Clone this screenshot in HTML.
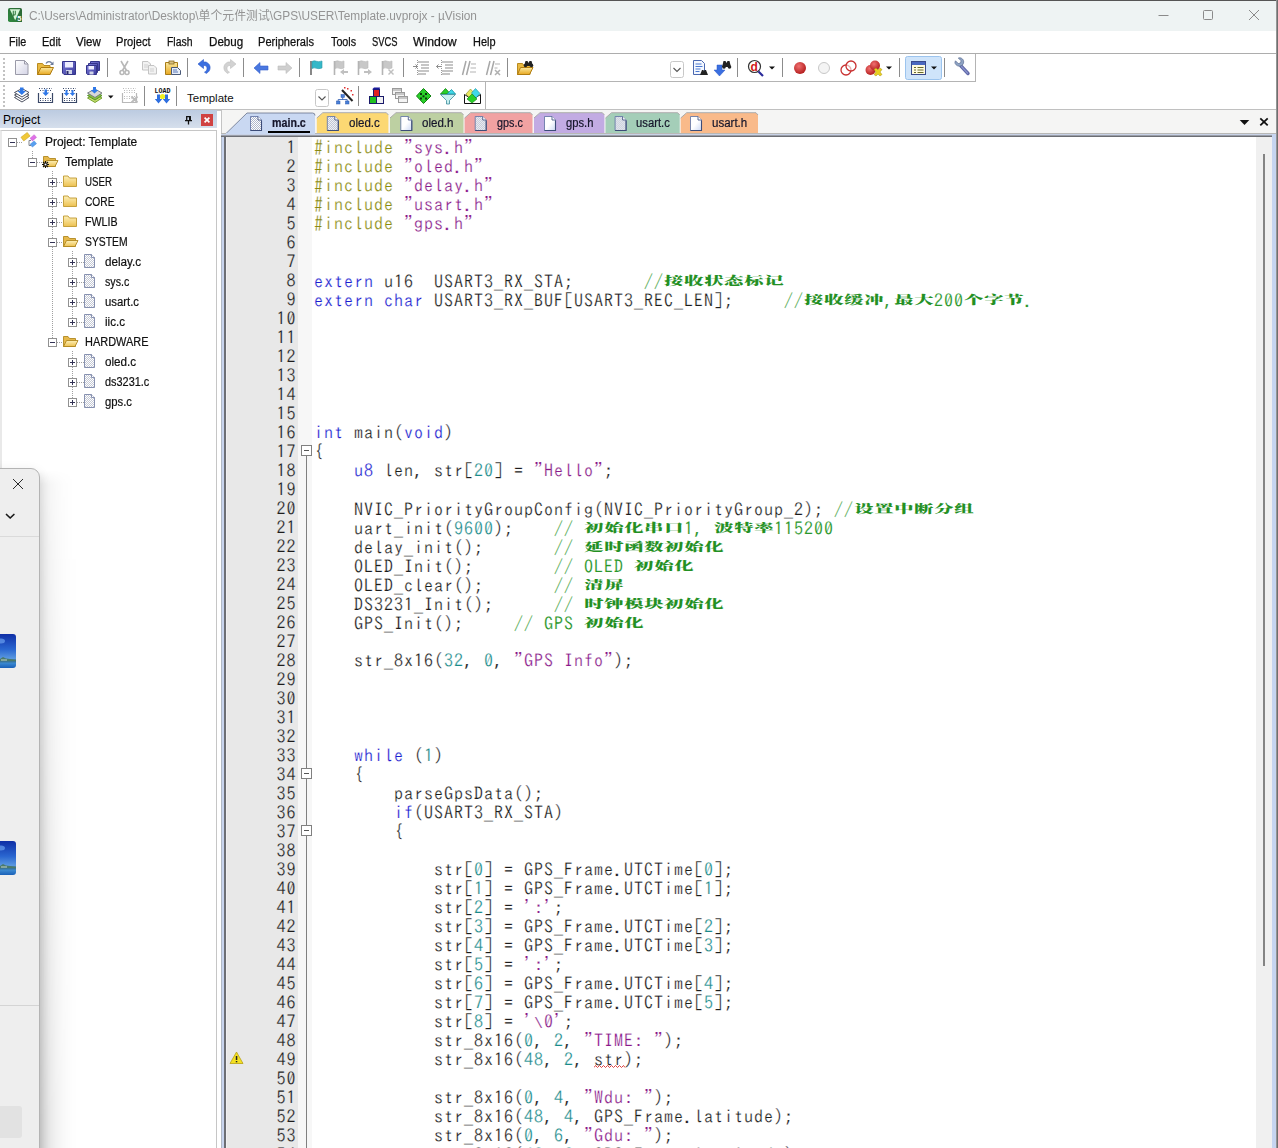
<!DOCTYPE html>
<html lang="zh"><head><meta charset="utf-8"><title>µVision</title>
<style>
*{box-sizing:border-box;margin:0;padding:0}
html,body{width:1278px;height:1148px;overflow:hidden;background:#fff}
body{position:relative;font-family:"Liberation Sans","Noto Sans CJK SC",sans-serif;font-size:12px;color:#000}
.abs{position:absolute}
#title{position:absolute;left:0;top:0;width:1278px;height:31px;background:#eef3f3;border-top:1px solid #555}
#title .t{position:absolute;left:29px;top:8px;font-size:12px;line-height:14px;color:#949494;white-space:nowrap;transform-origin:0 0}
#menu{position:absolute;left:0;top:31px;width:1278px;height:23px;background:#fff;border-bottom:1px solid #adadad}
#menu span{-webkit-text-stroke:.25px #111;position:absolute;top:4px;font-size:12px;line-height:14px;white-space:nowrap;transform-origin:0 0;color:#111}
#tb1{position:absolute;left:0;top:54px;width:976px;height:28px;border-bottom:1px solid #b4b4b4;border-right:1px solid #b4b4b4;background:#fff}
#tb2{position:absolute;left:0;top:82px;width:486px;height:28px;border-right:1px solid #b4b4b4;background:#fff}
#hline{position:absolute;left:0;top:109px;width:1278px;height:2px;background:linear-gradient(#bdbdbd,#cacaca)}
.sep{position:absolute;width:1px;background:#8c8c8c}
.grip{position:absolute;left:3px;width:3px;border-left:2px dotted #b0b0b0}
/* project panel */
#proj{position:absolute;left:0;top:110px;width:217px;height:1038px;background:#fff}
#projhd{position:absolute;left:0;top:0;width:217px;height:18px;background:linear-gradient(#bccbe1,#d6dfec);}
#projhd .lb{position:absolute;left:3px;top:3px;font-size:12px;line-height:14px;transform-origin:0 0;white-space:nowrap}
#tree{position:absolute;left:0;top:20px;width:217px;height:1018px;background:#fff;border:1px solid #c6c6c6;border-bottom:0;border-left:2px solid #e9e9e9}
.tr{-webkit-text-stroke:.2px #111;position:absolute;font-size:12px;white-space:nowrap;line-height:20px;height:20px;transform-origin:0 0;color:#111}
.ex{position:absolute;width:9px;height:9px;border:1px solid #919191;background:#fff}
.ex:before{content:"";position:absolute;left:1px;top:3px;width:5px;height:1px;background:#335}
.ex.pl:after{content:"";position:absolute;left:3px;top:1px;width:1px;height:5px;background:#335}
/* editor */
#tabs{position:absolute;left:222px;top:110px;width:1054px;height:24px;background:#f5f5f4}
.tab{position:absolute;top:3px;height:21px;border-radius:4px 4px 0 0;font-size:12px;line-height:20px;white-space:nowrap}
.tabl{-webkit-text-stroke:.2px #15152a;position:absolute;top:6px;font-size:12px;line-height:14px;white-space:nowrap;transform-origin:0 0;color:#15152a}
#edframe{position:absolute;left:221px;top:133px;width:1055px;height:1015px;background:linear-gradient(to right,#b0b8c4 0,#b0b8c4 1px,#c8d4ee 1px,#c8d4ee 3px,#6c6e74 3px,#6c6e74 5px,#f0f0f2 5px,#f0f0f2 6px,#fff 6px)}
#edtop{position:absolute;left:221px;top:133px;width:1055px;height:4px;background:linear-gradient(to bottom,#b8b8b6 0,#b8b8b6 1px,#c8d2e6 1px,#c8d2e6 2px,#9a9ea8 2px,#9a9ea8 3px,#6c6e74 3px)}
#edin{position:absolute;left:227px;top:137px;width:1029px;height:1011px;background:#fff}
#sb{position:absolute;left:1256px;top:137px;width:16px;height:1011px;background:#f0f0f0}
#sb i{position:absolute;left:7px;top:17px;width:2px;height:812px;background:#848484}
#rb{position:absolute;left:1272px;top:134px;width:4px;height:1014px;background:#c6d5f0}
#wb{position:absolute;left:1276px;top:0;width:2px;height:1148px;background:linear-gradient(to right,#a8a8a8,#5c5c5c)}
#gut{position:absolute;left:227px;top:137px;width:71px;height:1011px;background:#e8e8e8}
#fold{position:absolute;left:298px;top:137px;width:14px;height:1011px;background:#f7f7f7}
.ln,.cl{position:absolute;height:19px;line-height:19px;white-space:pre;font-family:"IPAGothic","Liberation Mono",monospace;font-size:18px;letter-spacing:1px}
.ln{left:226px;width:70.5px;text-align:right;color:#1c1c1c;-webkit-text-stroke:.2px #e8e8e8}
.cl{left:314px;color:#1c1c1c;-webkit-text-stroke:.22px #fff}
.cl i{font-style:normal;-webkit-text-stroke:.15px #333;color:#333}
.k{color:#1c1cd0}.n{color:#1a8a8a}.s{color:#8a1a8a}.p{color:#8a8a10}.c{color:#2a962a;-webkit-text-stroke:.12px #fff}
.c b{-webkit-text-stroke:.1px #239023;display:inline-block;width:20px;letter-spacing:0;font-family:"Noto Serif CJK SC",serif;font-weight:900;font-size:18px;color:#239023;transform:translateY(-1.5px) scale(1.07,.63);transform-origin:50% 62%;text-align:center}
.fb{position:absolute;left:301px;width:11px;height:11px;border:1px solid #808080;background:#fff}
.fb:before{content:"";position:absolute;left:2px;top:4px;width:5px;height:1px;background:#555}
.bs{font-family:"Liberation Mono",monospace;font-size:15px}
.sq{}
</style></head><body>

<div id="title">
<svg class="abs" style="left:8px;top:7px" width="14" height="14" viewBox="0 0 14 14"><defs><linearGradient id="lg0" x1="0" y1="1" x2="1" y2="0"><stop offset="0" stop-color="#2f8a40"/><stop offset="1" stop-color="#2a6434"/></linearGradient></defs><rect width="14" height="14" rx="1.800" fill="url(#lg0)"/><path d="M1.800 1.300h10.400l-5 11z" fill="#d6f6d8"/><path d="M5.300 2.800v3.200q0 1 1 1t1-1v-3.200M5.300 6v2.500" fill="none" stroke="#3a8048" stroke-width="1.100"/><rect x="9" y="8" width="5" height="6" fill="#2c7038"/><text x="9.300" y="13.300" font-family="Liberation Sans,sans-serif" font-weight="bold" font-size="7.500" fill="#fff">5</text></svg>
<div class="t" style="transform:scaleX(0.9893)">C:\Users\Administrator\Desktop\单个元件测试\GPS\USER\Template.uvprojx - µVision</div>
<svg class="abs" style="left:1156px;top:7px" width="110" height="16" viewBox="0 0 110 16" fill="none" stroke="#8a8a8a" stroke-width="1"><path d="M2.5 7.5h10"/><rect x="47.500" y="2.500" width="9" height="9" rx="1"/><path d="M93 2l10 10M103 2l-10 10"/></svg>
</div>

<div id="menu"><span style="left:8.5px;transform:scaleX(0.8943)">File</span><span style="left:41.7px;transform:scaleX(0.9136)">Edit</span><span style="left:76.3px;transform:scaleX(0.9614)">View</span><span style="left:116.4px;transform:scaleX(0.9261)">Project</span><span style="left:166.8px;transform:scaleX(0.869)">Flash</span><span style="left:208.5px;transform:scaleX(0.9668)">Debug</span><span style="left:258.3px;transform:scaleX(0.9225)">Peripherals</span><span style="left:330.5px;transform:scaleX(0.8959)">Tools</span><span style="left:372.2px;transform:scaleX(0.7801)">SVCS</span><span style="left:413.0px;transform:scaleX(1.0214)">Window</span><span style="left:472.5px;transform:scaleX(0.9114)">Help</span></div>

<div id="tb1"><svg class="abs" style="left:0;top:0" width="976" height="27" viewBox="0 0 976 27">
<defs>
<linearGradient id="gdoc" x1="0" y1="0" x2="1" y2="1"><stop offset="0" stop-color="#fff"/><stop offset="1" stop-color="#d4d4e6"/></linearGradient>
<linearGradient id="gfold" x1="0" y1="0" x2="0" y2="1"><stop offset="0" stop-color="#fbe9a0"/><stop offset="1" stop-color="#e8a820"/></linearGradient>
<linearGradient id="gflop" x1="0" y1="0" x2="1" y2="1"><stop offset="0" stop-color="#7a7ad8"/><stop offset="1" stop-color="#3c3c9c"/></linearGradient>
<radialGradient id="gred" cx=".4" cy=".35" r=".7"><stop offset="0" stop-color="#f07070"/><stop offset="1" stop-color="#b01818"/></radialGradient>
</defs>
<!-- grip -->
<g fill="#c2c2c2"><rect x="3" y="4" width="2" height="2"/><rect x="3" y="8" width="2" height="2"/><rect x="3" y="12" width="2" height="2"/><rect x="3" y="16" width="2" height="2"/><rect x="3" y="20" width="2" height="2"/><rect x="3" y="24" width="2" height="2"/></g>
<!-- new -->
<path d="M15.500 6.500h9l3.500 3.500v10.500h-12.500z" fill="url(#gdoc)" stroke="#9a9aa8"/><path d="M24.500 6.500v3.500h3.500" fill="none" stroke="#9a9aa8"/>
<!-- open -->
<path d="M37.500 20.500v-11h5l1.500 2h6v9z" fill="#e9b940" stroke="#b88a20"/><path d="M37.500 20.500l3.500-7h12.500l-3.500 7z" fill="url(#gfold)" stroke="#b07c10"/><path d="M46 9.500c1.500-2.500 4.500-2.500 6 0" fill="none" stroke="#6a7a9a" stroke-width="1.300"/><path d="M53.500 7.500v3.500h-3.500z" fill="#6a7a9a"/>
<!-- save -->
<path d="M62.500 7.500h13v13h-11.500l-1.500-1.500z" fill="url(#gflop)" stroke="#34348a"/><rect x="65" y="8" width="8" height="5.500" fill="#eef"/><rect x="66" y="16" width="6" height="4" fill="#cfd4e8"/><rect x="66.500" y="17" width="2" height="3" fill="#2a2a6a"/>
<!-- save all -->
<g><path d="M90.500 7.500h9v9h-9z" fill="url(#gflop)" stroke="#34348a"/><path d="M88.500 9.500h9v9h-9z" fill="url(#gflop)" stroke="#34348a"/><path d="M86.500 11.500h10v9h-9l-1-1z" fill="url(#gflop)" stroke="#34348a"/><rect x="88.500" y="12" width="5.500" height="3.500" fill="#eef"/><rect x="89.500" y="17.500" width="4" height="3" fill="#cfd4e8"/></g>
<rect x="107" y="4" width="1" height="19" fill="#8c8c8c"/>
<!-- cut -->
<g fill="none" stroke="#b8b8b8" stroke-width="1.600"><path d="M121 7l5.500 9.500M128 7l-5.500 9.500"/><circle cx="122" cy="18.500" r="2"/><circle cx="127" cy="18.500" r="2"/></g>
<!-- copy -->
<g fill="#f2f2f2" stroke="#c4c4c4"><path d="M142.500 7.500h5.500l2.500 2.500v6h-8z"/><path d="M148.500 11.500h5.500l2.500 2.500v6h-8z"/></g><path d="M144 11h4M144 13h4M150 15h4M150 17h4" stroke="#d0d0d0"/>
<!-- paste -->
<path d="M165.500 8.500h12v12h-12z" fill="url(#gfold)" stroke="#a87c18"/><rect x="169" y="7" width="5" height="3" fill="#d8c080" stroke="#8a6a20" stroke-width=".8"/><path d="M171.500 13.500h6l3 3v4h-9z" fill="#e8eef8" stroke="#4a5a78"/><path d="M173 16h4M173 18h5" stroke="#5a78b8"/>
<rect x="187" y="4" width="1" height="19" fill="#8c8c8c"/>
<!-- undo -->
<path d="M206 19.500c5-2 6-9 0-11.500h-2.500v-2.500l-5.500 4.500 5.500 4.500v-3h1.500c3 1 2.500 5.500-.5 6.500z" fill="#3b6fe0" stroke="#2a58c8" stroke-width=".6"/>
<!-- redo -->
<path d="M228 19.500c-5-2-6-9 0-11.500h2.500v-2.500l5.500 4.500-5.500 4.500v-3h-1.500c-3 1-2.500 5.500.5 6.500z" fill="#d2d2d2" stroke="#c0c0c0" stroke-width=".6"/>
<rect x="243" y="4" width="1" height="19" fill="#8c8c8c"/>
<!-- back / fwd -->
<path d="M254 14l6-5.500v3.500h8v4h-8v3.500z" fill="#4a78e0" stroke="#3460cc" stroke-width=".6"/>
<path d="M292 14l-6-5.500v3.500h-8v4h8v3.500z" fill="#cfcfcf" stroke="#bdbdbd" stroke-width=".6"/>
<rect x="299" y="4" width="1" height="19" fill="#8c8c8c"/>
<!-- flags -->
<path d="M311 7v14" stroke="#6a6a6a" stroke-width="1.600"/><path d="M312 7.500c3-2 5 1.500 10-.5v7c-5 2-7-1.500-10 .5z" fill="#35b8c8" stroke="#2a98a8" stroke-width=".6"/>
<g fill="#c8c8c8" stroke="#b8b8b8" stroke-width=".6"><path d="M335 7.500c3-2 5 1.500 9-.5v7c-4 2-6-1.500-9 .5z"/><path d="M359 7.500c3-2 5 1.500 9-.5v7c-4 2-6-1.500-9 .5z"/><path d="M383 7.500c3-2 5 1.500 9-.5v7c-4 2-6-1.500-9 .5z"/></g>
<g stroke="#b4b4b4" stroke-width="1.600"><path d="M334.500 7v14M358.500 7v14M382.500 7v14"/></g>
<g fill="#c0c0c0"><path d="M340 18l4-3v2h4v2h-4v2z"/><path d="M372 18l-4-3v2h-4v2h4v2z"/><path d="M389 15l2 2 2-2 1 1-2 2 2 2-1 1-2-2-2 2-1-1 2-2-2-2z"/></g>
<rect x="403" y="4" width="1" height="19" fill="#8c8c8c"/>
<!-- indent -->
<g stroke="#8c8c8c" stroke-width="1.200"><path d="M418 8h11M421 11h8M421 14h8M418 17h11M418 20h8"/><path d="M442 8h11M445 11h8M445 14h8M442 17h11M442 20h8"/></g>
<g stroke="#9a9a9a" stroke-dasharray="1 1"><path d="M417.500 6v16M441.500 6v16"/></g>
<path d="M413 12.500h4.500m-2-2l2 2-2 2" stroke="#8c8c8c" fill="none"/><path d="M441 12.500h-4.500m2-2l-2 2 2 2" stroke="#8c8c8c" fill="none"/>
<!-- comment -->
<g stroke="#a8a8a8" stroke-width="1.500"><path d="M466 7l-3.500 14M470 7l-3.500 14M490 7l-3.500 14M494 7l-3.500 14"/></g>
<g stroke="#b4b4b4" stroke-width="1.200"><path d="M471 10h5M470.500 14h5.500M470 18h6M495 10h5M494.500 14h3"/></g>
<path d="M495 16l5 5m0-5l-5 5" stroke="#b0b0b0" stroke-width="1.500"/>
<rect x="507" y="4" width="1" height="19" fill="#8c8c8c"/>
<!-- folder binoc -->
<path d="M517.500 20.500v-11h5l1.500 2h6v9z" fill="#e9b940" stroke="#b88a20"/><path d="M517.500 20.500l3-7h12.500l-3.500 7z" fill="url(#gfold)" stroke="#b07c10"/><path d="M524 12l1.500-5h2l1 2 1-2h2l1.500 5z" fill="#222"/><circle cx="525.500" cy="11.500" r="1.800" fill="#222"/><circle cx="531.500" cy="11.500" r="1.800" fill="#222"/>
<!-- combo -->
<rect x="670.500" y="7.500" width="13" height="16" rx="2" fill="#fff" stroke="#c8c8c8"/><path d="M673.500 14l3.500 3.500 3.500-3.500" fill="none" stroke="#555" stroke-width="1.100"/>
<!-- find in files -->
<path d="M693.500 6.500h8l3 3v11h-11z" fill="#f4f8ff" stroke="#4a68b0"/><path d="M695.500 10h6M695.500 12.500h7M695.500 15h5M695.500 17.500h4" stroke="#4a78d0" stroke-width="1"/><path d="M700 21l2-5h1.500l.5 1.500.5-1.500h1.500l2 5z" fill="#222"/>
<!-- arrow binoc -->
<path d="M717 11h5v5h3l-5.500 6-5.500-6h3z" fill="#3b6fe0" stroke="#2a58c8" stroke-width=".5"/><path d="M722 13l1.500-6h2l1 2 1-2h2l1.500 6z" fill="#222"/><circle cx="724" cy="13" r="1.800" fill="#222"/><circle cx="729.500" cy="13" r="1.800" fill="#222"/>
<rect x="737" y="4" width="1" height="19" fill="#8c8c8c"/>
<!-- debug -->
<circle cx="754.500" cy="12.500" r="6" fill="#fff" stroke="#333" stroke-width="1.200"/><path d="M758.500 17.500l4.500 4.500" stroke="#2a2a9a" stroke-width="2.200"/><text x="750.500" y="17" font-family="Liberation Sans,sans-serif" font-weight="bold" font-size="12" fill="#d01818">d</text>
<path d="M769 12.500h6l-3 3z" fill="#111"/>
<rect x="782" y="4" width="1" height="19" fill="#8c8c8c"/>
<!-- breakpoints -->
<circle cx="800" cy="14" r="6" fill="url(#gred)"/>
<circle cx="824" cy="14" r="5.500" fill="#f4f4f4" stroke="#c8c8c8"/>
<circle cx="846" cy="16" r="5" fill="#fff" stroke="#c83030" stroke-width="1.300"/><circle cx="851" cy="12" r="5" fill="#fff" fill-opacity=".6" stroke="#c83030" stroke-width="1.300"/>
<circle cx="870.500" cy="16" r="5" fill="url(#gred)"/><circle cx="875" cy="11.500" r="5" fill="url(#gred)"/><path d="M874 15.500l2-1.500 2 2 2-2 2 1.500-2 2.500 2 2.500-2 1.500-2-2-2 2-2-1.500 2-2.500z" fill="#e8d020" stroke="#a89010" stroke-width=".5"/>
<path d="M886 12.500h6l-3 3z" fill="#111"/>
<rect x="899" y="4" width="1" height="19" fill="#8c8c8c"/>
<!-- highlighted window button -->
<rect x="905.500" y="2.500" width="36" height="23" rx="2" fill="#cfe4fa" stroke="#9cc4ee"/>
<rect x="911.500" y="7.500" width="14" height="13" fill="#fffbe0" stroke="#3a4a8a"/><rect x="912" y="8" width="13" height="3" fill="#4a68c0"/><path d="M914 13.500h2M914 16h2M914 18.500h2M917.500 13.500h6M917.500 16h6M917.500 18.500h6" stroke="#6a6a2a"/>
<path d="M931 12.500h6l-3 3z" fill="#111"/>
<rect x="944" y="4" width="1" height="19" fill="#8c8c8c"/>
<!-- wrench -->
<path d="M961 12l7 7.500" stroke="#6068a8" stroke-width="3.400" stroke-linecap="round"/><path d="M961.500 12.500l6 6.500" stroke="#8a94cc" stroke-width="1.200" stroke-linecap="round"/>
<path d="M955.500 6.800l2.800 2.800 2.200-.6.600-2.200-2.800-2.800c3-1 6.200 1.700 5.200 5.200-.8 2.700-3.800 3.700-6 2.600-2.300-1.200-3.300-3.200-2-5z" fill="#8fa4c4" stroke="#5a6c90" stroke-width=".7"/>
</svg>
</div>
<div id="tb2"><svg class="abs" style="left:0;top:0" width="486" height="28" viewBox="0 0 486 28">
<g fill="#c2c2c2"><rect x="3" y="3" width="2" height="2"/><rect x="3" y="7" width="2" height="2"/><rect x="3" y="11" width="2" height="2"/><rect x="3" y="15" width="2" height="2"/><rect x="3" y="19" width="2" height="2"/><rect x="3" y="23" width="2" height="2"/></g>
<!-- translate: layers + arrow -->
<g fill="#fff" stroke="#3a4050" stroke-width=".9"><path d="M14.500 15.500l7.500-4 7 4-7 4.500z"/><path d="M14.500 13l7.500-4 7 4-7 4.500z"/><path d="M14.500 10.500l7.500-4 7 4-7 4.500z"/></g>
<path d="M20 5.500h3.500v3.500h2.500l-4.200 4-4.300-4h2.500z" fill="#2f78e8"/>
<!-- build -->
<path d="M38.500 11v9.500h14v-9.500" fill="none" stroke="#3a4868" stroke-width="1.200"/><g stroke="#3a4868" stroke-dasharray="1 1.500"><path d="M39 6.500h13M40 8.500h12M40 16.500h12M40 18.500h12"/></g><path d="M44.500 7.500h2.500v3h2.200l-3.500 3.500-3.400-3.500h2.200z" fill="#2f78e8"/>
<!-- rebuild -->
<path d="M62.500 11v9.500h14v-9.500" fill="none" stroke="#3a4868" stroke-width="1.200"/><g stroke="#3a4868" stroke-dasharray="1 1.500"><path d="M63 6.500h13M64 8.500h12M64 16.500h12M64 18.500h12"/></g><path d="M65.500 8h2v3h1.800l-2.800 3-2.800-3h1.800zM71.500 8h2v3h1.800l-2.800 3-2.800-3h1.800z" fill="#2f78e8"/>
<!-- batch -->
<g stroke-width=".9"><path d="M87.500 16l7.500-4 7 4-7 4.500z" fill="#c8e070" stroke="#6a9a20"/><path d="M87.500 13.500l7.500-4 7 4-7 4.500z" fill="#8ac040" stroke="#4a8a20"/><path d="M87.500 11l7.500-4 7 4-7 4.500z" fill="#d8d8d8" stroke="#70787a"/></g><path d="M93 5h3v3h2.300l-3.800 3.600-3.800-3.600h2.300z" fill="#2f78e8"/>
<path d="M108 13.500h5.500l-2.750 3z" fill="#111"/>
<!-- stop build (disabled) -->
<path d="M122.500 11v9.500h14v-9.500" fill="none" stroke="#b8b8b8" stroke-width="1.200"/><g stroke="#bcbcbc" stroke-dasharray="1 1.500"><path d="M123 6.500h13M124 8.500h12M124 10.500h12M124 14.500h12M124 16.500h8"/></g><path d="M131.500 14.500l6 6m0-6l-6 6" stroke="#bcbcbc" stroke-width="1.800"/>
<rect x="144" y="4" width="1" height="20" fill="#8c8c8c"/>
<!-- LOAD -->
<text x="154.500" y="11" font-family="Liberation Mono,monospace" font-weight="bold" font-size="6.800" fill="#111" textLength="16" lengthAdjust="spacingAndGlyphs">LOAD</text>
<path d="M157 12.500h3v4.500h2.200l-3.700 4.500-3.700-4.500h2.200zM165 12.500h3v4.500h2.200l-3.700 4.500-3.700-4.500h2.200z" fill="#2f6fe0"/><circle cx="162.500" cy="14.500" r="2.600" fill="#f0f020"/>
<rect x="176" y="4" width="1" height="20" fill="#8c8c8c"/>
<text x="187" y="20" font-family="Liberation Sans,sans-serif" font-size="11.500" fill="#111">Template</text>
<rect x="315.500" y="7.500" width="13" height="17" rx="2" fill="#fff" stroke="#c8c8c8"/><path d="M318.500 14.500l3.500 3.500 3.500-3.500" fill="none" stroke="#555" stroke-width="1.100"/>
<!-- wizard -->
<g fill="#4a80d8" stroke="#2a58b0" stroke-width=".5"><rect x="341" y="12.500" width="3.500" height="3"/><rect x="336.500" y="19" width="3.500" height="3"/><rect x="345.500" y="19" width="3.500" height="3"/></g><path d="M342.700 15.500v2M338.200 19v-1.500h9v1.500" fill="none" stroke="#2a58b0" stroke-width=".8"/>
<path d="M342 8l10.500 11" stroke="#222" stroke-width="2"/><g fill="#e03030"><rect x="347" y="6" width="1.500" height="1.500"/><rect x="350.500" y="8" width="1.500" height="1.500"/><rect x="352" y="12" width="1.500" height="1.500"/><rect x="344" y="5" width="1.500" height="1.500"/></g>
<rect x="358" y="4" width="1" height="20" fill="#8c8c8c"/>
<!-- cubes -->
<rect x="373.500" y="7.500" width="6" height="7" fill="#e02020" stroke="#1a1a6a"/><rect x="369.500" y="14.500" width="7" height="7" fill="#20c020" stroke="#1a1a6a"/><rect x="376.500" y="14.500" width="7" height="7" fill="#f0f0f0" stroke="#1a1a6a"/><path d="M372 7.500l2-2h6l-.5 2z" fill="#1a1a9a"/>
<!-- windows -->
<g fill="#f4f4f4" stroke="#9a9a9a"><rect x="392.500" y="6.500" width="9" height="6"/><rect x="395.500" y="10.500" width="9" height="6"/><rect x="398.500" y="14.500" width="9" height="6"/></g><path d="M393 8h8M396 12h8M399 16h8" stroke="#b8b8b8" stroke-width="1.500"/>
<!-- green diamond -->
<path d="M416.500 14l7-7.500 7.500 7.500-7.500 7.500z" fill="#28d028" stroke="#108010"/><g fill="#0a3a0a"><rect x="420" y="11" width="2" height="2"/><rect x="425" y="11" width="2" height="2"/><rect x="420" y="15.500" width="2" height="2"/><rect x="425" y="15.500" width="2" height="2"/><rect x="422.500" y="13.300" width="2" height="2"/></g>
<!-- funnel -->
<path d="M440.500 12l5-5.500 5 5.500z" fill="#28d028" stroke="#108010" stroke-width=".8"/><path d="M447 12l4.500-4.500 4 4.500z" fill="#40d8e8" stroke="#1090a0" stroke-width=".8"/><path d="M440.500 12.500h15l-6 6v3.500h-3v-3.500z" fill="#c8f0f0" stroke="#3a8a9a" stroke-width=".8"/>
<!-- envelope -->
<path d="M464.500 21.500v-9l8 5 8-5v9z" fill="#fff" stroke="#111" stroke-width="1"/><path d="M466 12l4.500-5 4.500 5-4.500 5z" fill="#e8e860" stroke="#8a8a20" stroke-width=".6"/><path d="M471.500 11l4-4.500 4.500 5-4 4.500z" fill="#40d8e8" stroke="#1090a0" stroke-width=".6"/><path d="M467 17l5-5 5 5-5 4z" fill="#28d028" stroke="#108010" stroke-width=".6"/>
</svg>
</div>
<div id="hline"></div>

<div id="proj">
<div id="projhd"><span class="lb">Project</span><svg class="abs" style="left:183px;top:2px" width="32" height="15" viewBox="0 0 32 15"><path d="M3.700 4.700h3.600v4h-3.600zM2 8.700h7M5.500 8.700v3.800" fill="none" stroke="#111" stroke-width="1.300"/><rect x="6" y="5" width="1.500" height="3.500" fill="#111"/><rect x="18" y="2" width="12" height="12" fill="#d04242"/><path d="M21.600 5.600l4.800 4.800m0-4.800l-4.800 4.800" stroke="#fff" stroke-width="1.700"/></svg></div>
<div id="tree"><svg class="abs" style="left:0;top:0" width="210" height="300" viewBox="0 0 210 300"><defs><linearGradient id="tg1" x1="0" y1="0" x2="0" y2="1"><stop offset="0" stop-color="#fdf0b8"/><stop offset="1" stop-color="#ecc050"/></linearGradient><pattern id="tdots" width="2" height="2" patternUnits="userSpaceOnUse"><rect width="2" height="2" fill="#fff"/><rect width="1" height="1" fill="#c4c8d4"/><rect x="1" y="1" width="1" height="1" fill="#c4c8d4"/></pattern><linearGradient id="tg2" x1="0" y1="0" x2="1" y2="1"><stop offset="0" stop-color="#fff"/><stop offset="1" stop-color="#d4dcec"/></linearGradient></defs><g stroke="#a0a0a0" stroke-dasharray="1 1" fill="none"><path d="M15 11.5H20"/><path d="M30.5 20V27"/><path d="M35 31.5H40"/><path d="M50.5 40V211"/><path d="M55 51.5H60"/><path d="M55 71.5H60"/><path d="M55 91.5H60"/><path d="M55 111.5H60"/><path d="M55 211.5H60"/><path d="M70.5 120V191"/><path d="M75 131.5H82"/><path d="M75 151.5H82"/><path d="M75 171.5H82"/><path d="M75 191.5H82"/><path d="M70.5 220V271"/><path d="M75 231.5H82"/><path d="M75 251.5H82"/><path d="M75 271.5H82"/></g><g transform="translate(0,0)"><rect x="-4" y="-2.300" width="8" height="4.600" fill="#f0c838" stroke="#c8a020" stroke-width=".5" transform="translate(23.500,5.700) rotate(-38)"/><path d="M29 9.500h-2v5h2" fill="none" stroke="#80848c" stroke-width="1"/><rect x="-2.700" y="-1.800" width="5.400" height="3.600" fill="#e070e8" stroke="#b850c0" stroke-width=".4" transform="translate(31.300,6.800) rotate(-40)"/><rect x="-2.700" y="-1.800" width="5.400" height="3.600" fill="#58a0f0" stroke="#3878d0" stroke-width=".4" transform="translate(31.300,13) rotate(-40)"/></g><g transform="translate(40,22)"><path d="M1.500 13.500v-10h4.500l1.500 2h6v8z" fill="#e6b84a" stroke="#b08820" stroke-width=".9"/><path d="M1.500 13.500l3-6h11.500l-3 6z" fill="url(#tg1)" stroke="#b08820" stroke-width=".9"/></g><g transform="translate(40,30)" stroke="#111" stroke-width="1.100"><path d="M0 3.500h7M3.500 0v7M1 1l5 5M6 1l-5 5"/><circle cx="3.500" cy="3.500" r="1.200" fill="#fff" stroke-width=".6"/></g><g transform="translate(60,42)"><path d="M1.500 13.500v-10.500h4.500l1.500 2h7v8.500z" fill="url(#tg1)" stroke="#c09830" stroke-width=".9"/></g><g transform="translate(60,62)"><path d="M1.500 13.500v-10.500h4.500l1.500 2h7v8.500z" fill="url(#tg1)" stroke="#c09830" stroke-width=".9"/></g><g transform="translate(60,82)"><path d="M1.500 13.500v-10.500h4.500l1.500 2h7v8.500z" fill="url(#tg1)" stroke="#c09830" stroke-width=".9"/></g><g transform="translate(60,102)"><path d="M1.500 13.500v-10h4.500l1.500 2h6v8z" fill="#e6b84a" stroke="#b08820" stroke-width=".9"/><path d="M1.500 13.500l3-6h11.500l-3 6z" fill="url(#tg1)" stroke="#b08820" stroke-width=".9"/></g><g transform="translate(80,122)"><path d="M2.500 1.500h7l3 3v10h-10z" fill="url(#tdots)" stroke="#7a86a8" stroke-width=".9"/><path d="M9.500 1.500v3h3" fill="#fff" stroke="#7a86a8" stroke-width=".9"/></g><g transform="translate(80,142)"><path d="M2.500 1.500h7l3 3v10h-10z" fill="url(#tdots)" stroke="#7a86a8" stroke-width=".9"/><path d="M9.500 1.500v3h3" fill="#fff" stroke="#7a86a8" stroke-width=".9"/></g><g transform="translate(80,162)"><path d="M2.500 1.500h7l3 3v10h-10z" fill="url(#tdots)" stroke="#7a86a8" stroke-width=".9"/><path d="M9.500 1.500v3h3" fill="#fff" stroke="#7a86a8" stroke-width=".9"/></g><g transform="translate(80,182)"><path d="M2.500 1.500h7l3 3v10h-10z" fill="url(#tdots)" stroke="#7a86a8" stroke-width=".9"/><path d="M9.500 1.500v3h3" fill="#fff" stroke="#7a86a8" stroke-width=".9"/></g><g transform="translate(60,202)"><path d="M1.500 13.500v-10h4.500l1.500 2h6v8z" fill="#e6b84a" stroke="#b08820" stroke-width=".9"/><path d="M1.500 13.500l3-6h11.500l-3 6z" fill="url(#tg1)" stroke="#b08820" stroke-width=".9"/></g><g transform="translate(80,222)"><path d="M2.500 1.500h7l3 3v10h-10z" fill="url(#tdots)" stroke="#7a86a8" stroke-width=".9"/><path d="M9.500 1.500v3h3" fill="#fff" stroke="#7a86a8" stroke-width=".9"/></g><g transform="translate(80,242)"><path d="M2.500 1.500h7l3 3v10h-10z" fill="url(#tdots)" stroke="#7a86a8" stroke-width=".9"/><path d="M9.500 1.500v3h3" fill="#fff" stroke="#7a86a8" stroke-width=".9"/></g><g transform="translate(80,262)"><path d="M2.500 1.500h7l3 3v10h-10z" fill="url(#tdots)" stroke="#7a86a8" stroke-width=".9"/><path d="M9.500 1.500v3h3" fill="#fff" stroke="#7a86a8" stroke-width=".9"/></g></svg>
<div class="ex" style="left:6px;top:7px"></div>
<div class="tr" style="left:43.0px;top:1px;transform:scaleX(0.9957)">Project: Template</div>
<div class="ex" style="left:26px;top:27px"></div>
<div class="tr" style="left:63.2px;top:21px;transform:scaleX(0.9958)">Template</div>
<div class="ex pl" style="left:46px;top:47px"></div>
<div class="tr" style="left:83.0px;top:41px;transform:scaleX(0.8097)">USER</div>
<div class="ex pl" style="left:46px;top:67px"></div>
<div class="tr" style="left:83.0px;top:61px;transform:scaleX(0.8508)">CORE</div>
<div class="ex pl" style="left:46px;top:87px"></div>
<div class="tr" style="left:83.0px;top:81px;transform:scaleX(0.889)">FWLIB</div>
<div class="ex" style="left:46px;top:107px"></div>
<div class="tr" style="left:83.0px;top:101px;transform:scaleX(0.8633)">SYSTEM</div>
<div class="ex pl" style="left:66px;top:127px"></div>
<div class="tr" style="left:103.4px;top:121px;transform:scaleX(0.9747)">delay.c</div>
<div class="ex pl" style="left:66px;top:147px"></div>
<div class="tr" style="left:103.4px;top:141px;transform:scaleX(0.8887)">sys.c</div>
<div class="ex pl" style="left:66px;top:167px"></div>
<div class="tr" style="left:103.4px;top:161px;transform:scaleX(0.944)">usart.c</div>
<div class="ex pl" style="left:66px;top:187px"></div>
<div class="tr" style="left:103.4px;top:181px;transform:scaleX(0.9675)">iic.c</div>
<div class="ex" style="left:46px;top:207px"></div>
<div class="tr" style="left:83.0px;top:201px;transform:scaleX(0.9128)">HARDWARE</div>
<div class="ex pl" style="left:66px;top:227px"></div>
<div class="tr" style="left:103.4px;top:221px;transform:scaleX(0.974)">oled.c</div>
<div class="ex pl" style="left:66px;top:247px"></div>
<div class="tr" style="left:103.4px;top:241px;transform:scaleX(0.9096)">ds3231.c</div>
<div class="ex pl" style="left:66px;top:267px"></div>
<div class="tr" style="left:103.4px;top:261px;transform:scaleX(0.9412)">gps.c</div></div>
</div>

<div style="position:absolute;left:221px;top:110px;width:1px;height:24px;background:#c4c4c4"></div><div id="tabs"><svg class="abs" style="left:0;top:0" width="1054" height="24" viewBox="0 0 1054 24"><defs><pattern id="dots" width="2" height="2" patternUnits="userSpaceOnUse"><rect width="2" height="2" fill="#fff"/><rect width="1" height="1" fill="#b0b8cc"/><rect x="1" y="1" width="1" height="1" fill="#b0b8cc"/></pattern><linearGradient id="wg" x1="0" y1="0" x2="1" y2="1"><stop offset=".5" stop-color="#fff"/><stop offset="1" stop-color="#ccd8f4"/></linearGradient></defs><path d="M4.0 23.500L25.0 3H90.5q2.500 0 2.500 2.500V23.500z" fill="#c9d8f2"/><path d="M4.0 23.500L25.0 3H90.5q2.500 0 2.500 2.500" fill="none" stroke="#68728a" stroke-width=".8"/><g transform="translate(28.0,6)"><path d="M.5.500h7.500l3.500 3.500v10.500h-11z" fill="url(#dots)" stroke="#6a7aa8" stroke-width=".9"/><path d="M11.500 4.500v10h-11" fill="none" stroke="#3c4c78" stroke-width="1.100"/><path d="M8 .5v3.500h3.500" fill="#fff" stroke="#4a5a88" stroke-width=".9"/></g><path d="M94.8 23V8L100.8 3H164.4L166.4 5V23z" fill="#fcd873"/><path d="M94.8 8L100.8 2.700H164.4L166.4 5" fill="none" stroke="#a4a4a4" stroke-width=".9"/><g transform="translate(104.8,6)"><path d="M.5.500h7.500l3.500 3.500v10.500h-11z" fill="url(#dots)" stroke="#6a7aa8" stroke-width=".9"/><path d="M11.500 4.500v10h-11" fill="none" stroke="#3c4c78" stroke-width="1.100"/><path d="M8 .5v3.500h3.500" fill="#fff" stroke="#4a5a88" stroke-width=".9"/></g><path d="M168.0 23V8L174.0 3H239.5L241.5 5V23z" fill="#bdd0a2"/><path d="M168.0 8L174.0 2.700H239.5L241.5 5" fill="none" stroke="#a4a4a4" stroke-width=".9"/><g transform="translate(178.3,6)"><path d="M.5.500h7.500l3.500 3.500v10.500h-11z" fill="url(#wg)" stroke="#6a7aa8" stroke-width=".9"/><path d="M11.500 4.500v10h-11" fill="none" stroke="#3c4c78" stroke-width="1.100"/><path d="M8 .5v3.500h3.500" fill="#fff" stroke="#4a5a88" stroke-width=".9"/></g><path d="M242.6 23V8L248.6 3H308.5L310.5 5V23z" fill="#f1a2a2"/><path d="M242.6 8L248.6 2.700H308.5L310.5 5" fill="none" stroke="#a4a4a4" stroke-width=".9"/><g transform="translate(252.7,6)"><path d="M.5.500h7.500l3.500 3.500v10.500h-11z" fill="url(#dots)" stroke="#6a7aa8" stroke-width=".9"/><path d="M11.500 4.500v10h-11" fill="none" stroke="#3c4c78" stroke-width="1.100"/><path d="M8 .5v3.500h3.500" fill="#fff" stroke="#4a5a88" stroke-width=".9"/></g><path d="M312.0 23V8L318.0 3H380.4L382.4 5V23z" fill="#c2abe3"/><path d="M312.0 8L318.0 2.700H380.4L382.4 5" fill="none" stroke="#a4a4a4" stroke-width=".9"/><g transform="translate(322.0,6)"><path d="M.5.500h7.500l3.500 3.500v10.500h-11z" fill="url(#wg)" stroke="#6a7aa8" stroke-width=".9"/><path d="M11.500 4.500v10h-11" fill="none" stroke="#3c4c78" stroke-width="1.100"/><path d="M8 .5v3.500h3.500" fill="#fff" stroke="#4a5a88" stroke-width=".9"/></g><path d="M383.5 23V8L389.5 3H455.7L457.7 5V23z" fill="#a4ceb8"/><path d="M383.5 8L389.5 2.700H455.7L457.7 5" fill="none" stroke="#a4a4a4" stroke-width=".9"/><g transform="translate(392.6,6)"><path d="M.5.500h7.500l3.500 3.500v10.500h-11z" fill="url(#dots)" stroke="#6a7aa8" stroke-width=".9"/><path d="M11.500 4.500v10h-11" fill="none" stroke="#3c4c78" stroke-width="1.100"/><path d="M8 .5v3.500h3.500" fill="#fff" stroke="#4a5a88" stroke-width=".9"/></g><path d="M458.7 23V8L464.7 3H534.0L536.0 5V23z" fill="#f9ba8a"/><path d="M458.7 8L464.7 2.700H534.0L536.0 5" fill="none" stroke="#a4a4a4" stroke-width=".9"/><g transform="translate(468.0,6)"><path d="M.5.500h7.500l3.500 3.500v10.500h-11z" fill="url(#wg)" stroke="#6a7aa8" stroke-width=".9"/><path d="M11.500 4.500v10h-11" fill="none" stroke="#3c4c78" stroke-width="1.100"/><path d="M8 .5v3.500h3.500" fill="#fff" stroke="#4a5a88" stroke-width=".9"/></g><rect x="46" y="21" width="42" height="2" fill="#000"/><path d="M1017.700 10h9.600l-4.800 5z" fill="#111"/><path d="M1038.300 8.300l7.400 7m0-7l-7.400 7" stroke="#111" stroke-width="1.800"/></svg><span class="tabl" style="left:50.0px;transform:scaleX(0.8891);font-weight:bold;">main.c</span><span class="tabl" style="left:126.8px;transform:scaleX(0.9616);">oled.c</span><span class="tabl" style="left:200.0px;transform:scaleX(0.9632);">oled.h</span><span class="tabl" style="left:275.0px;transform:scaleX(0.8993);">gps.c</span><span class="tabl" style="left:343.8px;transform:scaleX(0.9333);">gps.h</span><span class="tabl" style="left:414.4px;transform:scaleX(0.9385);">usart.c</span><span class="tabl" style="left:490.3px;transform:scaleX(0.9595);">usart.h</span></div>
<div id="edframe"></div><div id="edtop"></div><div style="position:absolute;left:226px;top:133px;width:89px;height:1px;background:#c9d8f2"></div><div id="edin"></div><div id="sb"><i></i></div><div id="rb"></div><div id="wb"></div>
<div id="gut"></div><div id="fold"></div>
<div class="ln" style="top:138px">1</div>
<div class="ln" style="top:157px">2</div>
<div class="ln" style="top:176px">3</div>
<div class="ln" style="top:195px">4</div>
<div class="ln" style="top:214px">5</div>
<div class="ln" style="top:233px">6</div>
<div class="ln" style="top:252px">7</div>
<div class="ln" style="top:271px">8</div>
<div class="ln" style="top:290px">9</div>
<div class="ln" style="top:309px">10</div>
<div class="ln" style="top:328px">11</div>
<div class="ln" style="top:347px">12</div>
<div class="ln" style="top:366px">13</div>
<div class="ln" style="top:385px">14</div>
<div class="ln" style="top:404px">15</div>
<div class="ln" style="top:423px">16</div>
<div class="ln" style="top:442px">17</div>
<div class="ln" style="top:461px">18</div>
<div class="ln" style="top:480px">19</div>
<div class="ln" style="top:499px">20</div>
<div class="ln" style="top:518px">21</div>
<div class="ln" style="top:537px">22</div>
<div class="ln" style="top:556px">23</div>
<div class="ln" style="top:575px">24</div>
<div class="ln" style="top:594px">25</div>
<div class="ln" style="top:613px">26</div>
<div class="ln" style="top:632px">27</div>
<div class="ln" style="top:651px">28</div>
<div class="ln" style="top:670px">29</div>
<div class="ln" style="top:689px">30</div>
<div class="ln" style="top:708px">31</div>
<div class="ln" style="top:727px">32</div>
<div class="ln" style="top:746px">33</div>
<div class="ln" style="top:765px">34</div>
<div class="ln" style="top:784px">35</div>
<div class="ln" style="top:803px">36</div>
<div class="ln" style="top:822px">37</div>
<div class="ln" style="top:841px">38</div>
<div class="ln" style="top:860px">39</div>
<div class="ln" style="top:879px">40</div>
<div class="ln" style="top:898px">41</div>
<div class="ln" style="top:917px">42</div>
<div class="ln" style="top:936px">43</div>
<div class="ln" style="top:955px">44</div>
<div class="ln" style="top:974px">45</div>
<div class="ln" style="top:993px">46</div>
<div class="ln" style="top:1012px">47</div>
<div class="ln" style="top:1031px">48</div>
<div class="ln" style="top:1050px">49</div>
<div class="ln" style="top:1069px">50</div>
<div class="ln" style="top:1088px">51</div>
<div class="ln" style="top:1107px">52</div>
<div class="ln" style="top:1126px">53</div>
<div class="ln" style="top:1145px">54</div>
<div class="cl" style="top:138px"><span class="p">#include</span> <span class="s">"sys.h"</span></div>
<div class="cl" style="top:157px"><span class="p">#include</span> <span class="s">"oled.h"</span></div>
<div class="cl" style="top:176px"><span class="p">#include</span> <span class="s">"delay.h"</span></div>
<div class="cl" style="top:195px"><span class="p">#include</span> <span class="s">"usart.h"</span></div>
<div class="cl" style="top:214px"><span class="p">#include</span> <span class="s">"gps.h"</span></div>
<div class="cl" style="top:271px"><span class="k">extern</span> u16  USART3<i>_</i>RX<i>_</i>STA;       <span class="c">//<b>接</b><b>收</b><b>状</b><b>态</b><b>标</b><b>记</b></span></div>
<div class="cl" style="top:290px"><span class="k">extern</span> <span class="k">char</span> USART3<i>_</i>RX<i>_</i>BUF[USART3<i>_</i>REC<i>_</i>LEN];     <span class="c">//<b>接</b><b>收</b><b>缓</b><b>冲</b>,<b>最</b><b>大</b>200<b>个</b><b>字</b><b>节</b>.</span></div>
<div class="cl" style="top:423px"><span class="k">int</span> main(<span class="k">void</span>)</div>
<div class="cl" style="top:442px">{</div>
<div class="cl" style="top:461px">    <span class="k">u8</span> len, str[<span class="n">20</span>] = <span class="s">"Hello"</span>;</div>
<div class="cl" style="top:499px">    NVIC<i>_</i>PriorityGroupConfig(NVIC<i>_</i>PriorityGroup<i>_</i>2); <span class="c">//<b>设</b><b>置</b><b>中</b><b>断</b><b>分</b><b>组</b></span></div>
<div class="cl" style="top:518px">    uart<i>_</i>init(<span class="n">9600</span>);    <span class="c">// <b>初</b><b>始</b><b>化</b><b>串</b><b>口</b>1, <b>波</b><b>特</b><b>率</b>115200</span></div>
<div class="cl" style="top:537px">    delay<i>_</i>init();       <span class="c">// <b>延</b><b>时</b><b>函</b><b>数</b><b>初</b><b>始</b><b>化</b></span></div>
<div class="cl" style="top:556px">    OLED<i>_</i>Init();        <span class="c">// OLED <b>初</b><b>始</b><b>化</b></span></div>
<div class="cl" style="top:575px">    OLED<i>_</i>clear();       <span class="c">// <b>清</b><b>屏</b></span></div>
<div class="cl" style="top:594px">    DS3231<i>_</i>Init();      <span class="c">// <b>时</b><b>钟</b><b>模</b><b>块</b><b>初</b><b>始</b><b>化</b></span></div>
<div class="cl" style="top:613px">    GPS<i>_</i>Init();     <span class="c">// GPS <b>初</b><b>始</b><b>化</b></span></div>
<div class="cl" style="top:651px">    str<i>_</i>8x16(<span class="n">32</span>, <span class="n">0</span>, <span class="s">"GPS Info"</span>);</div>
<div class="cl" style="top:746px">    <span class="k">while</span> (<span class="n">1</span>)</div>
<div class="cl" style="top:765px">    {</div>
<div class="cl" style="top:784px">        parseGpsData();</div>
<div class="cl" style="top:803px">        <span class="k">if</span>(USART3<i>_</i>RX<i>_</i>STA)</div>
<div class="cl" style="top:822px">        {</div>
<div class="cl" style="top:860px">            str[<span class="n">0</span>] = GPS<i>_</i>Frame.UTCTime[<span class="n">0</span>];</div>
<div class="cl" style="top:879px">            str[<span class="n">1</span>] = GPS<i>_</i>Frame.UTCTime[<span class="n">1</span>];</div>
<div class="cl" style="top:898px">            str[<span class="n">2</span>] = <span class="s">':'</span>;</div>
<div class="cl" style="top:917px">            str[<span class="n">3</span>] = GPS<i>_</i>Frame.UTCTime[<span class="n">2</span>];</div>
<div class="cl" style="top:936px">            str[<span class="n">4</span>] = GPS<i>_</i>Frame.UTCTime[<span class="n">3</span>];</div>
<div class="cl" style="top:955px">            str[<span class="n">5</span>] = <span class="s">':'</span>;</div>
<div class="cl" style="top:974px">            str[<span class="n">6</span>] = GPS<i>_</i>Frame.UTCTime[<span class="n">4</span>];</div>
<div class="cl" style="top:993px">            str[<span class="n">7</span>] = GPS<i>_</i>Frame.UTCTime[<span class="n">5</span>];</div>
<div class="cl" style="top:1012px">            str[<span class="n">8</span>] = <span class="s">'<span class="bs">\</span>0'</span>;</div>
<div class="cl" style="top:1031px">            str<i>_</i>8x16(<span class="n">0</span>, <span class="n">2</span>, <span class="s">"TIME: "</span>);</div>
<div class="cl" style="top:1050px">            str<i>_</i>8x16(<span class="n">48</span>, <span class="n">2</span>, <span class="sq">str</span>);</div>
<div class="cl" style="top:1088px">            str<i>_</i>8x16(<span class="n">0</span>, <span class="n">4</span>, <span class="s">"Wdu: "</span>);</div>
<div class="cl" style="top:1107px">            str<i>_</i>8x16(<span class="n">48</span>, <span class="n">4</span>, GPS<i>_</i>Frame.latitude);</div>
<div class="cl" style="top:1126px">            str<i>_</i>8x16(<span class="n">0</span>, <span class="n">6</span>, <span class="s">"Gdu: "</span>);</div>
<div class="cl" style="top:1145px">            str<i>_</i>8x16(<span class="n">48</span>, <span class="n">6</span>, GPS<i>_</i>Frame.longitude);</div>
<div style="position:absolute;left:306px;top:456px;width:1px;height:692px;background:#808080"></div>
<div class="fb" style="top:445px"></div>
<div class="fb" style="top:768px"></div>
<div class="fb" style="top:825px"></div>
<svg class="abs" style="left:229px;top:1051px" width="15" height="14" viewBox="0 0 15 14"><path d="M7.500 1l6.500 11.500h-13z" fill="#f4e020" stroke="#b8a010" stroke-width=".8"/><rect x="6.800" y="5" width="1.500" height="4" fill="#222"/><rect x="6.800" y="10" width="1.500" height="1.300" fill="#222"/></svg>
<svg class="abs" style="left:594px;top:1064px" width="32" height="5" viewBox="0 0 32 5"><path d="M0 3.500l1.500-2 2 2 2-2 2 2 2-2 2 2 2-2 2 2 2-2 2 2 2-2 2 2 2-2 2 2 2-2 1.500 2" fill="none" stroke="#d83030" stroke-width=".9"/></svg>
<div style="position:absolute;left:40px;top:470px;width:38px;height:678px;background:linear-gradient(to right,rgba(0,0,0,.2),rgba(0,0,0,.137) 13%,rgba(0,0,0,.09) 26%,rgba(0,0,0,.06) 39%,rgba(0,0,0,.035) 53%,rgba(0,0,0,.015) 70%,rgba(0,0,0,.004) 88%,transparent);-webkit-mask-image:linear-gradient(to bottom,transparent,rgba(0,0,0,.4) 14px,rgba(0,0,0,.5) 90px,#000 655px);mask-image:linear-gradient(to bottom,transparent,rgba(0,0,0,.4) 14px,rgba(0,0,0,.5) 90px,#000 655px)"></div>
<div id="ov" style="position:absolute;left:-20px;top:468px;width:60px;height:700px;background:#eeeeee;border:1px solid #b4b4b4;border-radius:0 9px 0 0;box-shadow:0 3px 12px rgba(0,0,0,.10)"></div>
<div style="position:absolute;left:0;top:536px;width:39px;height:1px;background:#dadada"></div>
<div style="position:absolute;left:0;top:1005px;width:39px;height:1px;background:#d4d4d4"></div>
<div style="position:absolute;left:-4px;top:1106px;width:26px;height:32px;border-radius:3px;background:#e2e2e2"></div>
<svg class="abs" style="left:0;top:470px" width="40" height="60" viewBox="0 0 40 60"><path d="M13 9l10 10m0-10l-10 10" stroke="#2a2a2a" stroke-width="1"/><path d="M6.500 44.500l3.700 3.500 3.700-3.500" fill="none" stroke="#1a1a1a" stroke-width="1.700" stroke-linecap="round" stroke-linejoin="round"/></svg>
<svg class="abs" style="left:0;top:633px" width="18" height="245" viewBox="0 0 18 245">
<defs><linearGradient id="sky" x1="0" y1="0" x2="0" y2="1"><stop offset="0" stop-color="#0f2fa6"/><stop offset=".45" stop-color="#2a66d0"/><stop offset=".72" stop-color="#5a98e0"/><stop offset=".78" stop-color="#3a6a78"/><stop offset=".86" stop-color="#3a88d0"/><stop offset="1" stop-color="#1a60b8"/></linearGradient><clipPath id="thc"><path d="M-4 1h17q3 0 3 3v28q0 3-3 3h-17z"/></clipPath></defs>
<g clip-path="url(#thc)"><rect x="-4" y="1" width="20" height="34" fill="url(#sky)"/><ellipse cx="1" cy="8" rx="4" ry="2.500" fill="#6aa0f0" opacity=".7"/><path d="M0 26l3-2 3 1.500 4 .5 6 1v1h-16z" fill="#4a7a6a"/><path d="M1 27h6" stroke="#dfe8e8" stroke-width=".8"/></g>
<g transform="translate(0,207)" clip-path="url(#thc)"><rect x="-4" y="1" width="20" height="34" fill="url(#sky)"/><ellipse cx="1" cy="8" rx="4" ry="2.500" fill="#6aa0f0" opacity=".7"/><path d="M0 26l3-2 3 1.500 4 .5 6 1v1h-16z" fill="#4a7a6a"/><path d="M1 27h6" stroke="#dfe8e8" stroke-width=".8"/></g>
</svg>

</body></html>
